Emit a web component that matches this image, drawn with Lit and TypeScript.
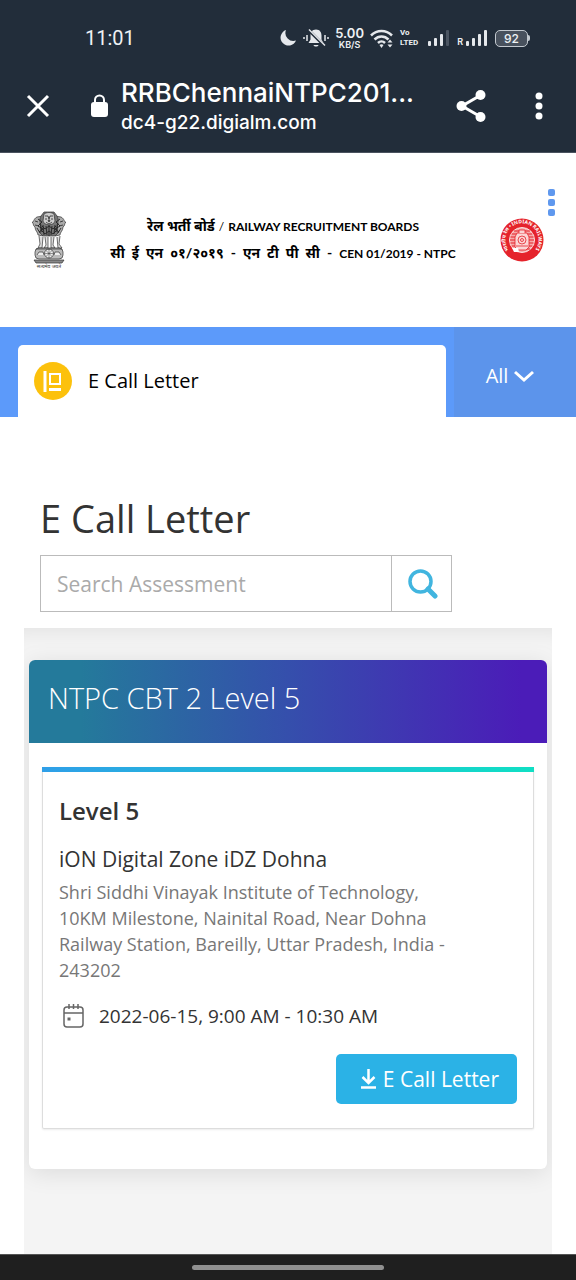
import { LitElement, html, css, svg } from "lit";
import { customElement, property } from "lit/decorators.js";

@customElement("status-bar")
class StatusBar extends LitElement {
  static styles = css`
    :host { display: block; color: #eef1f4; }
    .bar { display: flex; align-items: center; justify-content: space-between; height: 76px; padding: 0 46px 0 85px; }
    .time { font: 400 20px/24px Roboto, sans-serif; }
    .icons { display: flex; align-items: center; gap: 6px; }
    .icon { display: block; flex: none; }
    .speed { display: grid; justify-items: center; font: 600 13px/12px Inter, sans-serif; }
    .unit { font-size: 9px; line-height: 11px; }
    .lte { margin-right: 3px; font: 700 8px/10px Roboto, sans-serif; }
    .row { display: block; }
    .roaming { display: flex; align-items: flex-end; font: 600 9px/10px Inter, sans-serif; gap: 2px; }
    .battery { display: flex; align-items: center; }
    .cell { box-sizing: border-box; width: 33px; height: 17px; border: 1px solid #c3c9cf; border-radius: 5px; background: #48515d; font: 500 12px/15px Inter, sans-serif; text-align: center; }
    .cap { width: 2px; height: 6px; background: #c3c9cf; border-radius: 0 2px 2px 0; }
  `;
  bars(last: string) {
    return html`<svg class="icon" width="24" height="18" viewBox="0 0 24 18" fill="#e5e8ec" aria-hidden="true">
      <rect x="1" y="12" width="3" height="5" rx="1" /><rect x="7" y="9" width="3" height="8" rx="1" />
      <rect x="13" y="5" width="3" height="12" rx="1" /><rect x="19" y="1" width="3" height="16" rx="1" fill=${last} />
    </svg>`;
  }
  render() {
    return html`<div class="bar">
      <span class="time">11:01</span>
      <div class="icons">
        <svg class="icon" width="18" height="18" viewBox="0 0 18 18" aria-hidden="true"><path d="M7 1A8 8 0 1 0 17 11.500A8 8 0 0 1 7 1Z" fill="#e5e8ec" /></svg>
        <svg class="icon" width="26" height="20" viewBox="0 0 26 20" fill="none" aria-hidden="true">
          <path d="M13 1.500c-4 0-5.500 3-5.500 6v4L5.500 15h15l-2-3.500v-4c0-3-1.500-6-5.500-6Z" fill="#e5e8ec" />
          <path d="M10.500 17h5c-.5 2-4.500 2-5 0Z" fill="#e5e8ec" />
          <path d="M6 2.500 21 17.500" stroke="#222d3a" stroke-width="3" /><path d="m6 1.500 16 16" stroke="#e5e8ec" stroke-width="1.500" />
          <path d="M4 7v6M1 9v2M22 7v6M25 9v2" stroke="#e5e8ec" stroke-width="1.500" />
        </svg>
        <span class="speed"><span>5.00</span><span class="unit">KB/S</span></span>
        <svg class="icon" width="24" height="19" viewBox="0 0 24 19" fill="none" stroke="#e5e8ec" stroke-width="2.500" aria-hidden="true">
          <path d="M1 6.500c6-6 15-6 21 0M4.500 10.500c4-4 10-4 14 0M8 14c2-2 5-2 7 0" /><path d="m11.500 19-2-3c1-1 3-1 4 0Z" fill="#e5e8ec" stroke="none" />
          <path d="m17.500 13.500 2.500-3 2.500 3ZM17.500 15.500l2.500 3 2.500-3Z" fill="#e5e8ec" stroke="none" />
        </svg>
        <span class="lte"><span class="row">Vo</span><span class="row">LTED</span></span>
        ${this.bars("#4b5562")}
        <span class="roaming">R${this.bars("#e5e8ec")}</span>
        <span class="battery"><span class="cell">92</span><span class="cap"></span></span>
      </div>
    </div>`;
  }
}

@customElement("browser-toolbar")
class BrowserToolbar extends LitElement {
  @property() heading = "";
  @property() site = "";
  static styles = css`
    :host { display: block; color: #fff; }
    .bar { display: flex; align-items: center; height: 77px; padding: 0 21px 16px 22px; box-sizing: border-box; border-bottom: 1px solid #4a535f; }
    .tool { display: grid; place-items: center; flex: none; width: 32px; height: 44px; padding: 0; border: 0; background: none; color: inherit; }
    .lock { flex: none; margin: 0 12px 0 36px; }
    .page { flex: 1; min-width: 0; }
    .heading, .site { margin: 0; overflow: hidden; white-space: nowrap; text-overflow: ellipsis; }
    .heading { font: 500 26px/34px Inter, sans-serif; }
    .site { font: 500 19px/26px Inter, sans-serif; }
    .share { margin: 0 36px 0 24px; }
  `;
  render() {
    return html`<div class="bar">
      <button class="tool" aria-label="Close"><svg width="24" height="24" viewBox="0 0 24 24" stroke="#fff" stroke-width="3"><path d="m2 2 20 20M22 2 2 22" /></svg></button>
      <svg class="lock" width="19" height="24" viewBox="0 0 19 24" role="img" aria-label="Secure"><rect x="1" y="8" width="17" height="15" rx="3" fill="#fff" /><path d="M5 10V6a4.500 4.500 0 0 1 9 0v4" fill="none" stroke="#fff" stroke-width="2" /></svg>
      <div class="page"><p class="heading">${this.heading}</p><p class="site">${this.site}</p></div>
      <button class="tool share" aria-label="Share"><svg width="32" height="34" viewBox="0 0 32 34" fill="#fff"><path d="M26 6 7 17l19 11" fill="none" stroke="#fff" stroke-width="3" /><circle cx="25.500" cy="6" r="5" /><circle cx="6.500" cy="17" r="5" /><circle cx="25.500" cy="28" r="5" /></svg></button>
      <button class="tool" aria-label="More options"><svg width="8" height="28" viewBox="0 0 8 28" fill="#fff"><circle cx="4" cy="4" r="3.500" /><circle cx="4" cy="14" r="3.500" /><circle cx="4" cy="24" r="3.500" /></svg></button>
    </div>`;
  }
}

const emblem = html`<svg class="emblem" width="34" height="58" viewBox="0 0 34 58" role="img" aria-label="State Emblem of India">
  <g stroke="#333" stroke-width=".7" fill="#aaa">
    <path d="M5 6C1 8 2 12 0 11c2 2 1 4 3 5 0 4 3 5 3 8l5 1V5ZM29 6c4 2 3 6 5 5-2 2-1 4-3 5 0 4-3 5-3 8l-5 1V5Z" />
    <path d="M12 1h10l3 4c2 4 1 7 0 9l1 8-3 3H11l-3-3 1-8c-1-2-2-5 0-9Z" fill="#777" />
    <path d="M12 3c3-2 7-2 10 0l1 7c-1 5-11 5-12 0Z" fill="#ccc" />
    <path d="M13 5h3l1 3 1-3h3M13 8h2m4 0h2m-7 3c2 2 4 2 6 0M16 9h2l-1 2ZM3 10l3 1M31 10l-3 1M3 14l4 1m24-1-4 1" fill="none" stroke="#111" />
    <path d="M8 12l2 9m1-7 1 10m2-9 1 9m2-10v11m3-10-1 9m4-10-1 9m4-11-2 9M5 17l3 5m21-5-3 5M6 8l4 3-4 4 5 3-4 3m21-13-4 3 4 4-5 3 4 3M10 15l3 3 4-3 4 3 3-3M10 20l3 3 4-3 4 3 3-3" fill="none" stroke="#222" stroke-width=".9" />
    <path d="M7 25l1 8-2 4h4l1-11m2 0 1 8-2 3h4V26m3 0v11h4l-2-3 1-8m3 0 1 11h4l-3-4 1-8" fill="#ddd" />
    <rect x="3" y="37" width="28" height="11" rx="4" fill="#bbb" />
    <circle cx="17" cy="42.500" r="4.500" fill="#eee" /><path d="M17 38v9m-4.500-4.500h9M14 39.500l6 6m0-6-6 6" stroke-width=".5" />
    <path d="M5 44l2-3h4l1 3m10 0 1-3h4l2 3" fill="#eee" /><path d="M2 49h30l-2 3H4Z" fill="#888" /><path d="M4 38h26" />
  </g>
  <text x="17" y="57" text-anchor="middle" font-family="Noto Sans, sans-serif" font-size="5" fill="#333">सत्यमेव जयते</text>
</svg>`;

const railwaySeal = html`<svg class="seal" width="44" height="44" viewBox="0 0 44 44" role="img" aria-label="Indian Railways">
  <circle cx="22" cy="22" r="21.500" fill="#e5232b" />
  <defs><path id="ring" d="M9 32A16.500 16.500 0 1 1 35 32" /></defs>
  <text font-family="Noto Sans, sans-serif" font-size="5" font-weight="700" fill="#fff"><textPath href="#ring">भारतीय रेल • INDIAN RAILWAYS</textPath></text>
  <circle cx="22" cy="22" r="12.500" fill="#f6a8a8" stroke="#fff" stroke-width=".8" />
  ${[-9, -6, -3, 0, 3, 6, 9].map((o) => svg`<path d=${`M${22 - Math.sqrt(144 - o * o)} ${22 + o}H${22 + Math.sqrt(144 - o * o)}`} stroke="#e5232b" stroke-width="1" />`)}
  <g fill="#fbd5d5" stroke="#e5232b" stroke-width=".8"><path d="M17 15h10l2 4v10l-3 3h-8l-3-3V19Z" /><circle cx="22" cy="22" r="4" /><circle cx="22" cy="22" r="1.500" /><path d="M16 28h12M19 15v-3h6v3" /></g>
  <g fill="#fff"><path d="M12 30h6l1 4h-5Z" /></g>
</svg>`;

@customElement("board-header")
class BoardHeader extends LitElement {
  static styles = css`
    :host { display: block; }
    .header { position: relative; display: flex; align-items: center; justify-content: space-between; height: 174px; padding: 0 32px; box-sizing: border-box; }
    .emblem, .seal { flex: none; display: block; }
    .titles { font: 700 12px/26px Lato, "Noto Sans Devanagari", "Noto Sans", sans-serif; color: #000; text-align: center; white-space: nowrap; }
    .line { display: flex; justify-content: center; align-items: baseline; gap: 4px; }
    .spaced { gap: 7px; }
    .hindi { font-size: 14px; }
    .slash { font-weight: 400; }
    .more { position: absolute; right: 21px; top: 36px; display: grid; gap: 3px; padding: 0; border: 0; background: none; }
    .dot { width: 7px; height: 7px; border-radius: 2px; background: #5f98ee; }
  `;
  render() {
    return html`<header class="header">
      ${emblem}
      <div class="titles">
        <div class="line"><span class="hindi">रेल भर्ती बोर्ड</span><span class="slash">/</span><span>RAILWAY RECRUITMENT BOARDS</span></div>
        <div class="line spaced">${["सी", "ई", "एन", "०१/२०१९", "-", "एन", "टी", "पी", "सी", "-"].map((w) => html`<span class="hindi">${w}</span>`)}<span>CEN 01/2019 - NTPC</span></div>
      </div>
      ${railwaySeal}
      <button class="more" aria-label="Menu"><span class="dot"></span><span class="dot"></span><span class="dot"></span></button>
    </header>`;
  }
}

@customElement("tab-strip")
class TabStrip extends LitElement {
  static styles = css`
    :host { display: block; }
    .strip { display: flex; height: 90px; background: #5c9afa; }
    .tab, .all { display: flex; align-items: center; border: 0; font: 500 20px/28px "Open Sans", sans-serif; }
    .tab { flex: 1; gap: 16px; margin: 18px 8px 0 18px; padding: 0 16px; border-radius: 5px 5px 0 0; background: #fff; color: #000; }
    .all { justify-content: center; gap: 6px; width: 122px; padding: 8px 10px 0 0; background: #5c94eb; color: #fff; }
  `;
  render() {
    return html`<nav class="strip">
      <button class="tab">
        <svg width="38" height="38" viewBox="0 0 38 38" aria-hidden="true"><circle cx="19" cy="19" r="19" fill="#fcc10c" /><path d="M11 9v21" stroke="#fff" stroke-width="3" /><rect x="16" y="12" width="10" height="10" fill="none" stroke="#fff" stroke-width="2" /><path d="M15 27.500h12" stroke="#fff" stroke-width="3" /></svg>
        E Call Letter
      </button>
      <button class="all">All<svg width="20" height="14" viewBox="0 0 20 14" fill="none" stroke="#fff" stroke-width="3" aria-hidden="true"><path d="m1 3 9 8 9-8" /></svg></button>
    </nav>`;
  }
}

@customElement("call-card")
class CallCard extends LitElement {
  static styles = css`
    :host { display: block; font-family: "Open Sans", sans-serif; color: #333; }
    .card { background: #fff; border-radius: 6px; overflow: hidden; box-shadow: 0 4px 24px rgba(0, 0, 0, 0.1); }
    .name { margin: 0; padding: 18px 19px 25px; background: linear-gradient(90deg, #247a9b 10%, #354fac 50%, #4b1cb8 95%); color: #fff; font-weight: 300; font-size: 29px; line-height: 40px; }
    .body { padding: 24px 13px 40px; }
    .slot { border: 1px solid #ddd; border-top: 0; border-radius: 2px; box-shadow: 0 1px 2px rgba(0, 0, 0, 0.08); }
    .accent { height: 5px; margin: 0 -1px; background: linear-gradient(90deg, #2f9fe8, #10dfc4); }
    .content { padding: 23px 16px 24px; }
    .level { margin: 0 0 18px; font-size: 24px; line-height: 32px; font-weight: 600; }
    .centre { margin: 0 0 6px; font-size: 21px; line-height: 28px; font-weight: 400; }
    .address { margin: 0; max-width: 390px; color: #777; font-size: 18px; line-height: 26px; }
    .when { display: flex; align-items: center; gap: 13px; margin: 19px 0 0; padding-left: 3px; font-size: 19px; line-height: 28px; }
    .actions { display: flex; justify-content: flex-end; margin-top: 24px; }
    .download { display: flex; align-items: center; justify-content: center; gap: 6px; height: 50px; padding: 0 18px 0 24px; border: 0; border-radius: 5px; background: #2bb2e6; color: #fff; font: 400 21px/28px "Open Sans", sans-serif; }
  `;
  render() {
    return html`<article class="card">
      <h2 class="name">NTPC CBT 2 Level 5</h2>
      <div class="body"><section class="slot">
        <div class="accent"></div>
        <div class="content">
          <h3 class="level">Level 5</h3>
          <h4 class="centre">iON Digital Zone iDZ Dohna</h4>
          <p class="address">Shri Siddhi Vinayak Institute of Technology, 10KM Milestone, Nainital Road, Near Dohna Railway Station, Bareilly, Uttar Pradesh, India - 243202</p>
          <p class="when">
            <svg width="24" height="26" viewBox="0 0 24 26" fill="none" stroke="#666" stroke-width="1.500" aria-hidden="true"><rect x="2" y="4" width="19" height="20" rx="3" /><path d="M2 10h19M7 1v5M11.500 1v5M16 1v5" /><path d="M5.500 14.500h3v3h-3Z" fill="#666" stroke="none" /></svg>
            <span>2022-06-15, 9:00 AM - 10:30 AM</span>
          </p>
          <div class="actions"><button class="download">
            <svg width="17" height="22" viewBox="0 0 17 22" fill="none" stroke="#fff" stroke-width="2.500" aria-hidden="true"><path d="M8.500 1v14M2.500 9l6 6 6-6M1 19.500h15" /></svg>
            E Call Letter
          </button></div>
        </div>
      </section></div>
    </article>`;
  }
}

@customElement("app-root")
class AppRoot extends LitElement {
  static styles = css`
    :host { display: flex; flex-direction: column; min-height: 100vh; background: #fff; font-family: "Open Sans", sans-serif; color: #333; }
    .chrome { background: #222d3a; }
    .main { flex: 1; display: flex; flex-direction: column; padding: 78px 24px 0; }
    .title { margin: 0 16px 14px; font-size: 38px; line-height: 46px; font-weight: 400; }
    .search { display: flex; width: 78%; height: 57px; margin: 0 16px 16px; box-sizing: border-box; border: 1px solid #bbb; }
    .field { flex: 1; min-width: 0; padding: 0 16px; border: 0; background: none; color: #333; font: 400 21px/28px "Open Sans", sans-serif; }
    .field::placeholder { color: #aaa; opacity: 1; }
    .go { display: grid; place-items: center; box-sizing: border-box; width: 60px; padding: 0 0 0 4px; border: 0; border-left: 1px solid #bbb; background: none; }
    .panel { flex: 1; overflow: hidden; padding: 32px 5px; background: #f4f4f4; box-shadow: inset 0 20px 20px -16px rgba(0, 0, 0, 0.07); }
    .navbar { display: grid; place-items: center; height: 26px; background: #1f1f1f; border-top: 1px solid #555; box-sizing: border-box; }
    .handle { width: 192px; height: 5px; border-radius: 3px; background: #909090; }
  `;
  render() {
    return html`
      <div class="chrome"><status-bar></status-bar><browser-toolbar heading="RRBChennaiNTPC201..." site="dc4-g22.digialm.com"></browser-toolbar></div>
      <board-header></board-header>
      <tab-strip></tab-strip>
      <main class="main">
        <h1 class="title">E Call Letter</h1>
        <form class="search" role="search">
          <input class="field" type="search" aria-label="Search Assessment" placeholder="Search Assessment" />
          <button class="go" type="button" aria-label="Search"><svg width="30" height="30" viewBox="0 0 30 30" fill="none" stroke="#41b5df"><circle cx="12.500" cy="12.500" r="10.500" stroke-width="3.500" /><path d="m20 20 7 7" stroke-width="5" stroke-linecap="round" /></svg></button>
        </form>
        <div class="panel"><call-card></call-card></div>
      </main>
      <div class="navbar"><div class="handle"></div></div>
    `;
  }
}
